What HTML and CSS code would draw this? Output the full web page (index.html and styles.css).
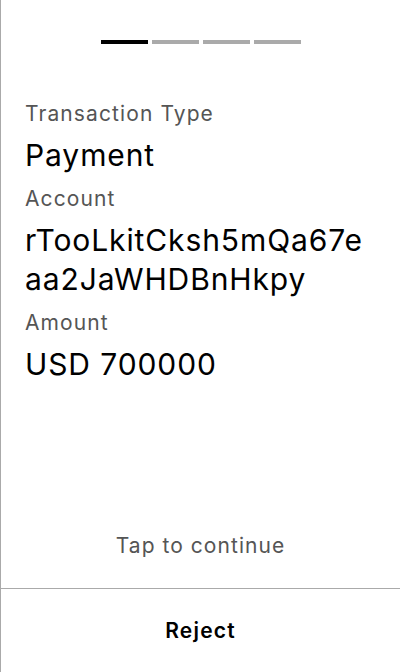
FILE: index.html
```html
<!DOCTYPE html>
<html>
<head>
<meta charset="utf-8">
<link rel="stylesheet" href="styles.css">
</head>
<body>
<div class="screen">
  <div class="progress">
    <span class="step active"></span>
    <span class="step"></span>
    <span class="step"></span>
    <span class="step"></span>
  </div>
  <div class="details">
    <div class="label">Transaction Type</div>
    <div class="value">Payment</div>
    <div class="label">Account</div>
    <div class="value">rTooLkitCksh5mQa67eaa2JaWHDBnHkpy</div>
    <div class="label">Amount</div>
    <div class="value">USD 700000</div>
  </div>
  <div class="hint">Tap to continue</div>
  <div class="footer">Reject</div>
</div>
</body>
</html>
```
FILE: styles.css
```css
html, body {
  margin: 0;
  padding: 0;
  background: #fff;
}
body {
  font-family: Inter, "Noto Sans", sans-serif;
}
.screen {
  height: 672px;
  box-sizing: border-box;
  border-left: 1px solid #aaaaaa;
  display: flex;
  flex-direction: column;
}
.progress {
  display: flex;
  justify-content: center;
  gap: 4px;
  margin-top: 40px;
}
.step {
  width: 47px;
  height: 4px;
  background: #aaaaaa;
}
.step.active {
  background: #000;
}
.details {
  padding: 56px 24px 0 24px;
  flex: 1;
}
.label {
  font-size: 21px;
  line-height: 28px;
  letter-spacing: 1.1px;
  color: #555555;
  margin-bottom: 8px;
}
.value {
  font-size: 30px;
  line-height: 39px;
  letter-spacing: 0.9px;
  color: #000;
  margin-bottom: 10px;
  word-break: break-all;
}
.hint {
  text-align: center;
  font-size: 21px;
  line-height: 28px;
  letter-spacing: 1.05px;
  color: #555555;
  margin-bottom: 28px;
}
.footer {
  border-top: 1px solid #aaaaaa;
  height: 83px;
  display: flex;
  align-items: center;
  justify-content: center;
  font-size: 21px;
  font-weight: 600;
  letter-spacing: 1.2px;
  color: #000;
}
```
